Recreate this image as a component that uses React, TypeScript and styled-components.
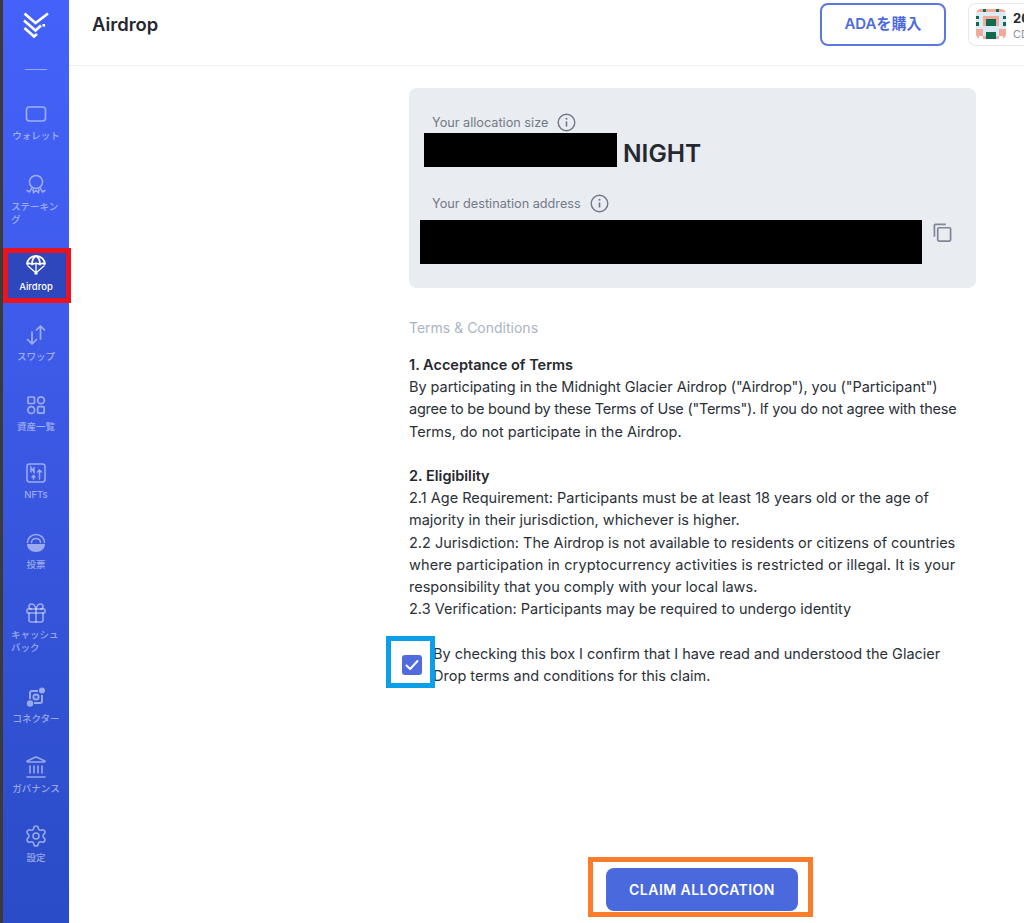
import React from 'react';
import styled, { createGlobalStyle } from 'styled-components';
import { Gift, Landmark, Settings } from 'lucide-react';

const GlobalStyle = createGlobalStyle`
  html, body {
    margin: 0;
    padding: 0;
    background: #ffffff;
    overflow: hidden;
  }
  body {
    font-family: "Inter", "Noto Sans CJK JP", sans-serif;
    color: #25282e;
  }
`;

// Page shell
const Page = styled.div`
  position: relative;
  display: flex;
  width: 1024px;
  height: 923px;
  overflow: hidden;
  border-left: 3px solid #3a3a3c;
  box-sizing: border-box;
`;

const Sidebar = styled.nav`
  flex: 0 0 66px;
  display: flex;
  flex-direction: column;
  align-items: stretch;
  background: linear-gradient(180deg, #4462fa 0%, #3d5ae8 40%, #2a4cc6 100%);
  padding-top: 12px;
  box-sizing: border-box;
`;

const LogoWrap = styled.div`
  display: flex;
  justify-content: center;
  height: 27px;
`;

const Divider = styled.div`
  width: 22px;
  height: 1px;
  margin: 30px auto 31px;
  background: rgba(255, 255, 255, 0.45);
`;

const NavItem = styled.div<{ $active?: boolean; $pitch: number }>`
  display: flex;
  flex-direction: column;
  align-items: center;
  height: 47px;
  margin-bottom: ${({ $pitch }) => $pitch - 47}px;
  padding-top: 1px;
  box-sizing: border-box;
  color: ${({ $active }) => ($active ? '#ffffff' : 'rgba(255, 255, 255, 0.5)')};
  background: ${({ $active }) => ($active ? '#2f47bd' : 'transparent')};
`;

const NavIcon = styled.div`
  display: flex;
  align-items: center;
  justify-content: center;
  width: 24px;
  height: 24px;
`;

const NavLabel = styled.div<{ $left?: boolean }>`
  width: 50px;
  margin-top: 3px;
  font-size: 9.5px;
  line-height: 13px;
  font-weight: 500;
  text-align: ${({ $left }) => ($left ? 'left' : 'center')};
`;

const Main = styled.div`
  flex: 1;
  min-width: 0;
  display: flex;
  flex-direction: column;
`;

const Header = styled.header`
  flex: 0 0 66px;
  display: flex;
  align-items: flex-start;
  border-bottom: 1px solid #eceef1;
  box-sizing: border-box;
  padding: 3px 0 0 23px;
`;

const PageTitle = styled.h1`
  margin: 8px 0 0;
  font-size: 18.4px;
  line-height: 26px;
  font-weight: 600;
  color: #25282e;
`;

const BuyButton = styled.button`
  margin: 0 22px 0 auto;
  width: 126px;
  height: 43px;
  padding: 0 0 5px;
  background: #ffffff;
  border: 2px solid #5a78e0;
  border-radius: 8px;
  color: #4d6bdc;
  font-family: inherit;
  font-size: 15px;
  font-weight: 600;
`;

const WalletCard = styled.div`
  display: flex;
  gap: 7px;
  width: 56px;
  height: 43px;
  padding: 5px 0 0 7px;
  box-sizing: border-box;
  border: 1px solid #e6e8ec;
  border-right: none;
  border-radius: 8px 0 0 8px;
  overflow: hidden;
`;

const WalletText = styled.div`
  white-space: nowrap;
`;

const WalletAmount = styled.div`
  font-size: 13px;
  line-height: 18px;
  font-weight: 700;
  color: #25282e;
`;

const WalletUnit = styled.div`
  font-size: 11px;
  line-height: 14px;
  color: #8b919c;
`;

const Content = styled.main`
  flex: 1;
  display: flex;
  flex-direction: column;
  width: 567px;
  margin-left: 340px;
  padding: 22px 0 12px;
  box-sizing: border-box;
`;

const InfoPanel = styled.section`
  height: 200px;
  padding: 25px 0 0 11px;
  background: #e9ecf1;
  border-radius: 8px;
  box-sizing: border-box;
`;

const FieldLabel = styled.div`
  display: flex;
  align-items: center;
  gap: 9px;
  height: 18px;
  margin-left: 12px;
  font-size: 12.7px;
  color: #737a87;
`;

const AllocationRow = styled.div`
  display: flex;
  align-items: center;
  gap: 6px;
  height: 34px;
  margin: 2px 0 27px 4px;
`;

const RedactedAmount = styled.div`
  width: 193px;
  height: 34px;
  background: #000000;
`;

const AllocationUnit = styled.span`
  padding-top: 5px;
  font-size: 24.5px;
  font-weight: 600;
  color: #25282e;
`;

const AddressRow = styled.div`
  display: flex;
  align-items: flex-start;
  gap: 11px;
  margin-top: 8px;
`;

const RedactedAddress = styled.div`
  width: 502px;
  height: 44px;
  background: #000000;
`;

const CopyButton = styled.div`
  display: flex;
  margin-top: 3px;
  color: #7f8896;
`;

const TermsTitle = styled.div`
  margin: 31px 0 17px;
  font-size: 14px;
  line-height: 18px;
  color: #aab4c5;
`;

const TermsHeading = styled.div`
  font-size: 14.5px;
  line-height: 22.2px;
  font-weight: 600;
  color: #25282e;
`;

const TermsLine = styled.div<{ $spacing?: number }>`
  font-size: 14.5px;
  line-height: 22.2px;
  white-space: nowrap;
  letter-spacing: ${({ $spacing }) => $spacing ?? 0}px;
  color: #2c3038;
`;

const TermsSection = styled.div`
  margin-bottom: 22.2px;
`;

const ConfirmRow = styled.label`
  display: flex;
  align-items: center;
  gap: 11px;
  margin: 0 0 0 -7px;
  font-size: 14.5px;
  line-height: 22.2px;
  color: #2c3038;
`;

const CheckBox = styled.span`
  flex: 0 0 20px;
  display: flex;
  align-items: center;
  justify-content: center;
  width: 20px;
  height: 20px;
  background: #4f6bdd;
  border-radius: 3px;
`;

const ClaimButton = styled.button`
  align-self: flex-start;
  margin: auto 0 0 197px;
  width: 192px;
  height: 43px;
  background: #4a69dc;
  border: none;
  border-radius: 8px;
  color: #ffffff;
  font-family: inherit;
  font-size: 14px;
  font-weight: 600;
  letter-spacing: 0.45px;
`;

// Annotation frames drawn on top of the page
const Frame = styled.div<{ $color: string; $x: number; $y: number; $w: number; $h: number }>`
  position: absolute;
  left: ${({ $x }) => $x}px;
  top: ${({ $y }) => $y}px;
  width: ${({ $w }) => $w}px;
  height: ${({ $h }) => $h}px;
  border: 5px solid ${({ $color }) => $color};
  box-sizing: border-box;
  pointer-events: none;
`;

const AvatarBox = styled.div`
  flex: 0 0 30px;
  width: 30px;
  height: 30px;
  border-radius: 5px;
  overflow: hidden;
`;

const Logo = () => (
  <svg width="26" height="27" viewBox="0 0 26 27" fill="none" stroke="#ffffff" strokeWidth="2.6">
    <path d="M1.500 1.500 12.500 11 25 1.500" />
    <path d="M1 8.500 12.500 18.500 18 13.500" />
    <path d="M1.500 16 11 24.500 14 22" />
    <rect x="20" y="12.500" width="1.600" height="1.600" fill="#ffffff" strokeWidth="1" />
  </svg>
);

const WalletIcon = () => (
  <svg width="24" height="24" viewBox="0 0 24 24" fill="none" stroke="currentColor" strokeWidth="1.6">
    <rect x="2.500" y="5" width="19" height="14" rx="3" />
  </svg>
);

const StakingIcon = () => (
  <svg width="24" height="24" viewBox="0 0 24 24" fill="none" stroke="currentColor" strokeWidth="1.5" strokeLinecap="round">
    <circle cx="12" cy="9" r="6.500" />
    <path d="M7.500 15.500 5.500 19 3 17.500M9 16.500l.5 3 2.500-2 2.500 2 .5-3M16.500 15.500l2 3.500 2.500-1.500" />
  </svg>
);

const ParachuteIcon = () => (
  <svg width="24" height="24" viewBox="0 0 24 24" fill="none" stroke="#ffffff" strokeWidth="1.800" strokeLinejoin="round">
    <path d="M3 11.500C3 6.500 7 3 12 3s9 3.500 9 8.500" />
    <path d="M3 11.500c1.500-1.500 4-1.500 5 0 1-1.500 7-1.500 8 0 1-1.500 3.500-1.500 5 0" />
    <path d="M8 11.500C8 7 10 4 12 3c2 1 4 4 4 8.500" />
    <path d="M3.500 12.500 11 19M20.500 12.500 13 19M12 10.500V19" strokeWidth="1.300" />
    <rect x="10.500" y="18.500" width="3" height="3" fill="#ffffff" stroke="none" />
  </svg>
);

const SwapIcon = () => (
  <svg width="24" height="24" viewBox="0 0 24 24" fill="none" stroke="currentColor" strokeWidth="1.700" strokeLinecap="round" strokeLinejoin="round">
    <path d="M8 9v12M3.500 16.500 8 21l4.500-4.500" />
    <path d="M16.500 16V3M12.500 7l4-4 4 4" />
  </svg>
);

const AssetsIcon = () => (
  <svg width="24" height="24" viewBox="0 0 24 24" fill="none" stroke="currentColor" strokeWidth="1.700">
    <rect x="4" y="4" width="6.500" height="6.500" rx="1" />
    <circle cx="17" cy="7.250" r="3.400" />
    <circle cx="7.250" cy="17" r="3.400" />
    <rect x="13.700" y="13.700" width="6.500" height="6.500" rx="1" />
  </svg>
);

const NftIcon = () => (
  <svg width="24" height="24" viewBox="0 0 24 24" fill="none" stroke="currentColor" strokeWidth="1.500" strokeLinecap="round">
    <rect x="3" y="3" width="18" height="18" rx="2.500" />
    <path d="M7 11V6.500l3 4.500V6.500" />
    <path d="M9.500 18v-3M8 16l1.500-1.500L11 16M15.500 18V9M13.500 11l2-2 2 2" />
  </svg>
);

const VoteIcon = () => (
  <svg width="24" height="24" viewBox="0 0 24 24" fill="none" stroke="currentColor" strokeWidth="1.500" strokeLinecap="round">
    <path d="M3.500 11.500a8.500 8 0 0 1 17 0" />
    <path d="M7.500 11.500a4.500 4 0 0 1 9 0" />
    <path d="M3 13h18c0 4.500-4 8-9 8s-9-3.500-9-8z" fill="currentColor" stroke="none" />
  </svg>
);

const ConnectorIcon = () => (
  <svg width="24" height="24" viewBox="0 0 24 24" fill="none" stroke="currentColor" strokeWidth="2">
    <circle cx="18" cy="5.500" r="3" fill="currentColor" stroke="none" />
    <circle cx="6" cy="18.500" r="3.200" fill="currentColor" stroke="none" />
    <circle cx="12" cy="12" r="2.600" />
    <path d="M6 14V8a2 2 0 0 1 2-2h6" />
    <path d="M18 10v6a2 2 0 0 1-2 2h-6" />
  </svg>
);

const InfoIcon = () => (
  <svg width="19" height="19" viewBox="0 0 19 19" fill="none" stroke="#6f7785" strokeWidth="1.400">
    <circle cx="9.500" cy="9.500" r="8.300" />
    <path d="M9.500 8.500v5" strokeWidth="1.600" />
    <circle cx="9.500" cy="5.700" r="1" fill="#6f7785" stroke="none" />
  </svg>
);

const CopyIcon = () => (
  <svg width="19" height="19" viewBox="0 0 20 20" fill="none" stroke="currentColor" strokeWidth="1.800">
    <rect x="5" y="5" width="13.500" height="14" rx="1" />
    <path d="M1.500 14.500V2.500a1 1 0 0 1 1-1h11" />
  </svg>
);

const CheckIcon = () => (
  <svg width="14" height="14" viewBox="0 0 14 14" fill="none" stroke="#ffffff" strokeWidth="2" strokeLinecap="round" strokeLinejoin="round">
    <path d="M1.500 7.500l3.700 3.500 7.300-8" />
  </svg>
);

const avatarRows = [
  'ppdpppdpp',
  'lllllllll',
  'dlpppppld',
  'llpdddpll',
  'dlpdddpld',
  'lllllllll',
  'pplllllpp',
  'ppldddlpp',
  'pwpdddpwp',
];

const avatarColors: Record<string, string> = {
  d: '#0f6b4f',
  p: '#f4a99b',
  l: '#dcebf3',
  w: '#ffffff',
};

const Avatar = () => (
  <AvatarBox>
    <svg width="30" height="30" viewBox="0 0 9 9" shapeRendering="crispEdges">
      {avatarRows.map((row, y) =>
        row.split('').map((c, x) => <rect key={`${x}-${y}`} x={x} y={y} width="1" height="1" fill={avatarColors[c]} />),
      )}
    </svg>
  </AvatarBox>
);

const navItems = [
  { label: 'ウォレット', icon: <WalletIcon />, pitch: 71 },
  { label: 'ステーキング', icon: <StakingIcon />, pitch: 80, left: true },
  { label: 'Airdrop', icon: <ParachuteIcon />, pitch: 70, active: true },
  { label: 'スワップ', icon: <SwapIcon />, pitch: 70 },
  { label: '資産一覧', icon: <AssetsIcon />, pitch: 68 },
  { label: 'NFTs', icon: <NftIcon />, pitch: 70 },
  { label: '投票', icon: <VoteIcon />, pitch: 70 },
  { label: 'キャッシュバック', icon: <Gift size={24} strokeWidth={1.6} />, pitch: 84, left: true },
  { label: 'コネクター', icon: <ConnectorIcon />, pitch: 70 },
  { label: 'ガバナンス', icon: <Landmark size={24} strokeWidth={1.6} />, pitch: 69 },
  { label: '設定', icon: <Settings size={24} strokeWidth={1.6} />, pitch: 70 },
];

export default function App() {
  return (
    <Page>
      <GlobalStyle />
      <Sidebar>
        <LogoWrap>
          <Logo />
        </LogoWrap>
        <Divider />
        {navItems.map((item) => (
          <NavItem key={item.label} $active={item.active} $pitch={item.pitch}>
            <NavIcon>{item.icon}</NavIcon>
            <NavLabel $left={item.left}>{item.label}</NavLabel>
          </NavItem>
        ))}
      </Sidebar>
      <Main>
        <Header>
          <PageTitle>Airdrop</PageTitle>
          <BuyButton>ADAを購入</BuyButton>
          <WalletCard>
            <Avatar />
            <WalletText>
              <WalletAmount>20</WalletAmount>
              <WalletUnit>CD</WalletUnit>
            </WalletText>
          </WalletCard>
        </Header>
        <Content>
          <InfoPanel>
            <FieldLabel>
              Your allocation size <InfoIcon />
            </FieldLabel>
            <AllocationRow>
              <RedactedAmount />
              <AllocationUnit>NIGHT</AllocationUnit>
            </AllocationRow>
            <FieldLabel>
              Your destination address <InfoIcon />
            </FieldLabel>
            <AddressRow>
              <RedactedAddress />
              <CopyButton>
                <CopyIcon />
              </CopyButton>
            </AddressRow>
          </InfoPanel>
          <TermsTitle>Terms &amp; Conditions</TermsTitle>
          <TermsSection>
            <TermsHeading>1. Acceptance of Terms</TermsHeading>
            <TermsLine $spacing={-0.05}>By participating in the Midnight Glacier Airdrop ("Airdrop"), you ("Participant")</TermsLine>
            <TermsLine $spacing={-0.25}>agree to be bound by these Terms of Use ("Terms"). If you do not agree with these</TermsLine>
            <TermsLine>Terms, do not participate in the Airdrop.</TermsLine>
          </TermsSection>
          <TermsSection>
            <TermsHeading>2. Eligibility</TermsHeading>
            <TermsLine>2.1 Age Requirement: Participants must be at least 18 years old or the age of</TermsLine>
            <TermsLine>majority in their jurisdiction, whichever is higher.</TermsLine>
            <TermsLine>2.2 Jurisdiction: The Airdrop is not available to residents or citizens of countries</TermsLine>
            <TermsLine $spacing={0.12}>where participation in cryptocurrency activities is restricted or illegal. It is your</TermsLine>
            <TermsLine>responsibility that you comply with your local laws.</TermsLine>
            <TermsLine>2.3 Verification: Participants may be required to undergo identity</TermsLine>
          </TermsSection>
          <ConfirmRow>
            <CheckBox>
              <CheckIcon />
            </CheckBox>
            <span>
              By checking this box I confirm that I have read and understood the Glacier Drop terms and conditions for
              this claim.
            </span>
          </ConfirmRow>
          <ClaimButton>CLAIM ALLOCATION</ClaimButton>
        </Content>
      </Main>
      <Frame $color="#e8141f" $x={0} $y={248} $w={68} $h={55} />
      <Frame $color="#0a9fe6" $x={383} $y={636} $w={49} $h={52} />
      <Frame $color="#fb7c2b" $x={585} $y={857} $w={225} $h={60} />
    </Page>
  );
}
